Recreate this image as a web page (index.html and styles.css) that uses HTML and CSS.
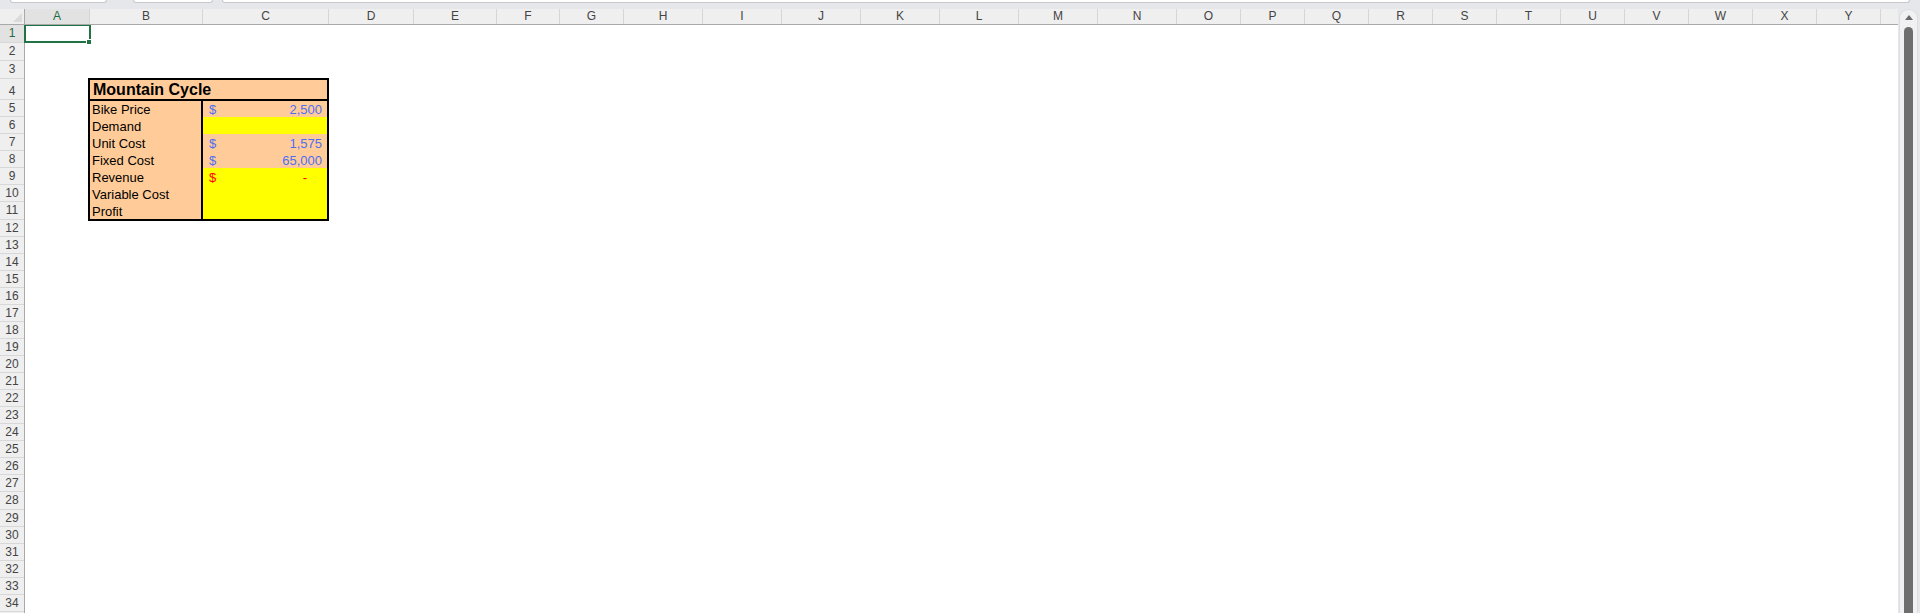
FILE: index.html
```html
<!DOCTYPE html>
<html lang="en">
<head>
<meta charset="utf-8">
<title>Mountain Cycle</title>
<link rel="stylesheet" href="styles.css">
</head>
<body>
<div class="app">
  <div class="topband">
    <div class="fbox fbox-name"></div>
    <div class="fbox fbox-mid"></div>
    <div class="fbox fbox-input"></div>
  </div>
  <div class="main">
    <div class="sheet">
      <div class="colhead">
        <div class="corner"><svg width="24" height="15" viewBox="0 0 24 15"><polygon points="22,4 22,13 13,13" fill="#dadada"/></svg></div>
        <div class="ch ch-sel">A</div>
        <div class="ch">B</div>
        <div class="ch">C</div>
        <div class="ch">D</div>
        <div class="ch">E</div>
        <div class="ch">F</div>
        <div class="ch">G</div>
        <div class="ch">H</div>
        <div class="ch">I</div>
        <div class="ch">J</div>
        <div class="ch">K</div>
        <div class="ch">L</div>
        <div class="ch">M</div>
        <div class="ch">N</div>
        <div class="ch">O</div>
        <div class="ch">P</div>
        <div class="ch">Q</div>
        <div class="ch">R</div>
        <div class="ch">S</div>
        <div class="ch">T</div>
        <div class="ch">U</div>
        <div class="ch">V</div>
        <div class="ch">W</div>
        <div class="ch">X</div>
        <div class="ch">Y</div>
        <div class="ch ch-fill"></div>
      </div>
      <div class="body">
        <div class="rowhead">
          <div class="rn rn-tall rn-sel">1</div>
          <div class="rn rn-tall">2</div>
          <div class="rn rn-tall">3</div>
          <div class="rn rn-title">4</div>
          <div class="rn">5</div>
          <div class="rn">6</div>
          <div class="rn">7</div>
          <div class="rn">8</div>
          <div class="rn">9</div>
          <div class="rn">10</div>
          <div class="rn rn-tall">11</div>
          <div class="rn">12</div>
          <div class="rn">13</div>
          <div class="rn">14</div>
          <div class="rn">15</div>
          <div class="rn">16</div>
          <div class="rn">17</div>
          <div class="rn">18</div>
          <div class="rn">19</div>
          <div class="rn">20</div>
          <div class="rn">21</div>
          <div class="rn">22</div>
          <div class="rn">23</div>
          <div class="rn">24</div>
          <div class="rn">25</div>
          <div class="rn">26</div>
          <div class="rn">27</div>
          <div class="rn rn-tall">28</div>
          <div class="rn">29</div>
          <div class="rn">30</div>
          <div class="rn">31</div>
          <div class="rn">32</div>
          <div class="rn">33</div>
          <div class="rn">34</div>
        </div>
        <div class="cells">
          <div class="model">
            <div class="title">Mountain Cycle</div>
            <div class="lbl">Bike Price</div>
            <div class="val peach blue"><span>$</span><span>2,500</span></div>
            <div class="lbl">Demand</div>
            <div class="val yellow"></div>
            <div class="lbl">Unit Cost</div>
            <div class="val peach blue"><span>$</span><span>1,575</span></div>
            <div class="lbl">Fixed Cost</div>
            <div class="val peach blue"><span>$</span><span>65,000</span></div>
            <div class="lbl">Revenue</div>
            <div class="val yellow red dash"><span>$</span><span>-</span></div>
            <div class="lbl">Variable Cost</div>
            <div class="val yellow"></div>
            <div class="lbl">Profit</div>
            <div class="val yellow"></div>
          </div>
          <div class="selection"><div class="handle"></div></div>
        </div>
      </div>
    </div>
    <div class="vscroll">
      <div class="vtrack">
        <svg class="vup" width="8" height="5" viewBox="0 0 8 5"><polygon points="4,0 8,5 0,5" fill="#6b6b6b"/></svg>
        <div class="vthumb"></div>
      </div>
    </div>
  </div>
</div>
</body>
</html>
```

FILE: styles.css
```css
* { box-sizing: border-box; }

html, body {
  margin: 0;
  padding: 0;
}

body {
  width: 1920px;
  height: 613px;
  overflow: hidden;
  background: #ffffff;
  font-family: "Liberation Sans", Arial, sans-serif;
}

.app {
  display: flex;
  flex-direction: column;
  height: 613px;
}

/* ---------- formula bar remnant ---------- */
.topband {
  height: 9px;
  flex: none;
  background: #e6e7eb;
  display: flex;
  align-items: flex-start;
  padding-left: 10px;
}

.fbox {
  height: 3px;
  background: #ffffff;
  border: 1px solid #c8c8cc;
  border-top: none;
  border-radius: 0 0 3px 3px;
}

.fbox-name { width: 97px; }
.fbox-mid { width: 80px; margin-left: 26px; }
.fbox-input { width: 1688px; margin-left: 9px; }

/* ---------- main area ---------- */
.main {
  flex: 1;
  display: flex;
  min-height: 0;
}

.sheet {
  width: 1898px;
  display: flex;
  flex-direction: column;
}

.colhead {
  height: 16px;
  flex: none;
  display: grid;
  grid-template-columns: 25px 65px 113px 126px 85px 83px 63px 64px repeat(7, 79px) repeat(11, 64px) 1fr;
  background: #efefef;
  border-bottom: 1px solid #a9a9a9;
}

.corner {
  border-right: 1px solid #a9a9a9;
  overflow: hidden;
}

.corner svg { display: block; }

.ch {
  border-right: 1px solid #d6d6d6;
  text-align: center;
  font-size: 12px;
  line-height: 15px;
  color: #444444;
}

.ch-fill { border-right: none; }

.ch-sel {
  background: #e2e2e2;
  color: #1e6b41;
}

.body {
  flex: 1;
  display: flex;
  min-height: 0;
  overflow: hidden;
}

.rowhead {
  width: 25px;
  flex: none;
  background: #efefef;
  border-right: 1px solid #a9a9a9;
}

.rn {
  height: 17px;
  line-height: 16px;
  border-bottom: 1px solid #d8d8d8;
  text-align: center;
  font-size: 12px;
  color: #444444;
}

.rn-tall { height: 18px; line-height: 17px; }
.rn-title { height: 21px; line-height: 20px; padding-top: 2px; }

.rn-sel {
  background: #e2e2e2;
  color: #1e6b41;
}

.cells {
  flex: 1;
  position: relative;
}

/* ---------- the model block (B4:C11) ---------- */
.model {
  margin: 53px 0 0 63px;
  width: 241px;
  border: 2px solid #000000;
  display: grid;
  grid-template-columns: 111px 126px;
  grid-template-rows: 21px 16px repeat(6, 17px);
  background: #ffcc99;
  font-size: 13px;
  color: #000000;
}

.title {
  grid-column: 1 / -1;
  border-bottom: 2px solid #000000;
  font-size: 16px;
  font-weight: bold;
  line-height: 18px;
  padding-left: 3px;
  display: flex;
  align-items: flex-end;
}

.lbl {
  padding-left: 2px;
  line-height: 15px;
  display: flex;
  align-items: flex-end;
  white-space: nowrap;
}

.val {
  border-left: 2px solid #000000;
  padding: 0 5px 0 6px;
  line-height: 15px;
  display: flex;
  justify-content: space-between;
  align-items: flex-end;
}

.peach { background: #ffcc99; }
.yellow { background: #ffff00; }
.blue { color: #4f6ef2; }
.red { color: #ff0000; }
.dash { padding-right: 20px; }

/* ---------- active cell A1 ---------- */
.selection {
  position: absolute;
  left: -1px;
  top: -1px;
  width: 67px;
  height: 19px;
  border: 2px solid #217346;
}

.handle {
  position: absolute;
  right: -3px;
  bottom: -4px;
  width: 6px;
  height: 6px;
  background: #217346;
  border: 1px solid #ffffff;
}

/* ---------- vertical scrollbar ---------- */
.vscroll {
  width: 22px;
  flex: none;
  background: #e6e7eb;
  padding: 0 2px 0 1px;
}

.vtrack {
  height: 100%;
  background: #f1f1f4;
  border: 1px solid #dcdce1;
  border-bottom: none;
  border-radius: 9px 9px 0 0;
  display: flex;
  flex-direction: column;
  align-items: center;
  padding-top: 5px;
}

.vup { display: block; flex: none; }

.vthumb {
  flex: 1;
  width: 9px;
  margin-top: 7px;
  background: #6e6e6e;
  border-radius: 5px 5px 0 0;
}
```
